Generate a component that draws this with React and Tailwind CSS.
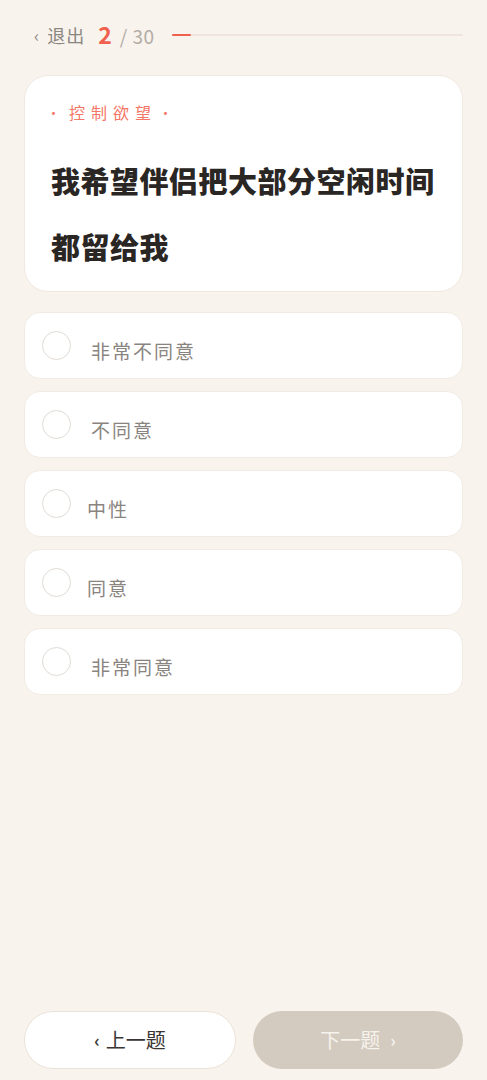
import React, { useState } from "react";

const options = [
  { label: "非常不同意", indent: "ml-5" },
  { label: "不同意", indent: "ml-5" },
  { label: "中性", indent: "ml-4" },
  { label: "同意", indent: "ml-4" },
  { label: "非常同意", indent: "ml-5" },
];

const font = { fontFamily: '"Noto Sans CJK SC", "Noto Sans", sans-serif' };

export default function App() {
  const [picked, setPicked] = useState(null);
  const current = 2;
  const total = 30;

  return (
    <div
      className="h-screen bg-[#f8f3ec] flex flex-col px-6 pb-[11px]"
      style={font}
    >
      {/* 顶部进度 */}
      <div className="flex items-center mt-[23px] h-6">
        <button className="flex items-center text-[#8c8681] text-[18px] leading-6 tracking-[1px] ml-[10px]">
          <span className="text-[17px] mr-[7px]">‹</span>
          退出
        </button>
        <div className="flex items-baseline ml-[13px] leading-6">
          <span className="text-[#f0604e] text-[23px] font-bold">{current}</span>
          <span className="text-[#b3aca6] text-[19px] ml-[8px] tracking-[0.5px]">/ {total}</span>
        </div>
        <div className="flex-1 ml-[17px] h-[2px] bg-[#efe4de] rounded-full">
          <div
            className="h-full bg-[#f0604e] rounded-full"
            style={{ width: `${(current / total) * 100}%` }}
          />
        </div>
      </div>

      {/* 题目卡片 */}
      <div className="mt-[28px] bg-white rounded-[24px] border border-[#f0e9e0] pt-[24px] pb-[12px] px-[26px]">
        <div className="flex items-center text-[#f37667] text-[16px] leading-6">
          <span className="w-[5px] flex justify-center text-[14px]">·</span>
          <span className="ml-[13px] tracking-[6px]">控制欲望</span>
          <span className="ml-[6px] w-[5px] flex justify-center text-[14px]">·</span>
        </div>
        <h1 className="mt-[23px] text-[29px] leading-[66px] font-black text-[#2a2624] tracking-[0.5px] whitespace-nowrap">
          我希望伴侣把大部分空闲时间
          <br />
          都留给我
        </h1>
      </div>

      {/* 选项 */}
      <div className="mt-5 flex flex-col gap-3">
        {options.map((o, i) => (
          <button
            key={o.label}
            onClick={() => setPicked(i)}
            className="h-[67px] bg-white rounded-[16px] border border-[#f1ebe3] flex items-center pl-[17px] text-left"
          >
            <span
              className={
                picked === i
                  ? "w-[29px] h-[29px] rounded-full border-[7px] border-[#f0604e]"
                  : "w-[29px] h-[29px] rounded-full border-[1.5px] border-[#e0dbd6]"
              }
            />
            <span className={`${o.indent} mt-[10px] text-[19px] leading-7 tracking-[2px] text-[#8a8480]`}>
              {o.label}
            </span>
          </button>
        ))}
      </div>

      <div className="flex-1" />

      {/* 底部按钮 */}
      <div className="flex gap-[17px]">
        <button className="flex-1 h-[58px] rounded-full bg-white border border-[#ebe3d8] text-[#3a3532] text-[20px] flex items-center justify-center">
          <span className="text-[17px] font-bold mr-[6px]">‹</span>上一题
        </button>
        <button className="flex-1 h-[58px] rounded-full bg-[#d3cac0] text-[#f6f2ec] text-[20px] flex items-center justify-center">
          下一题<span className="text-[17px] font-bold ml-[10px]">›</span>
        </button>
      </div>
    </div>
  );
}
